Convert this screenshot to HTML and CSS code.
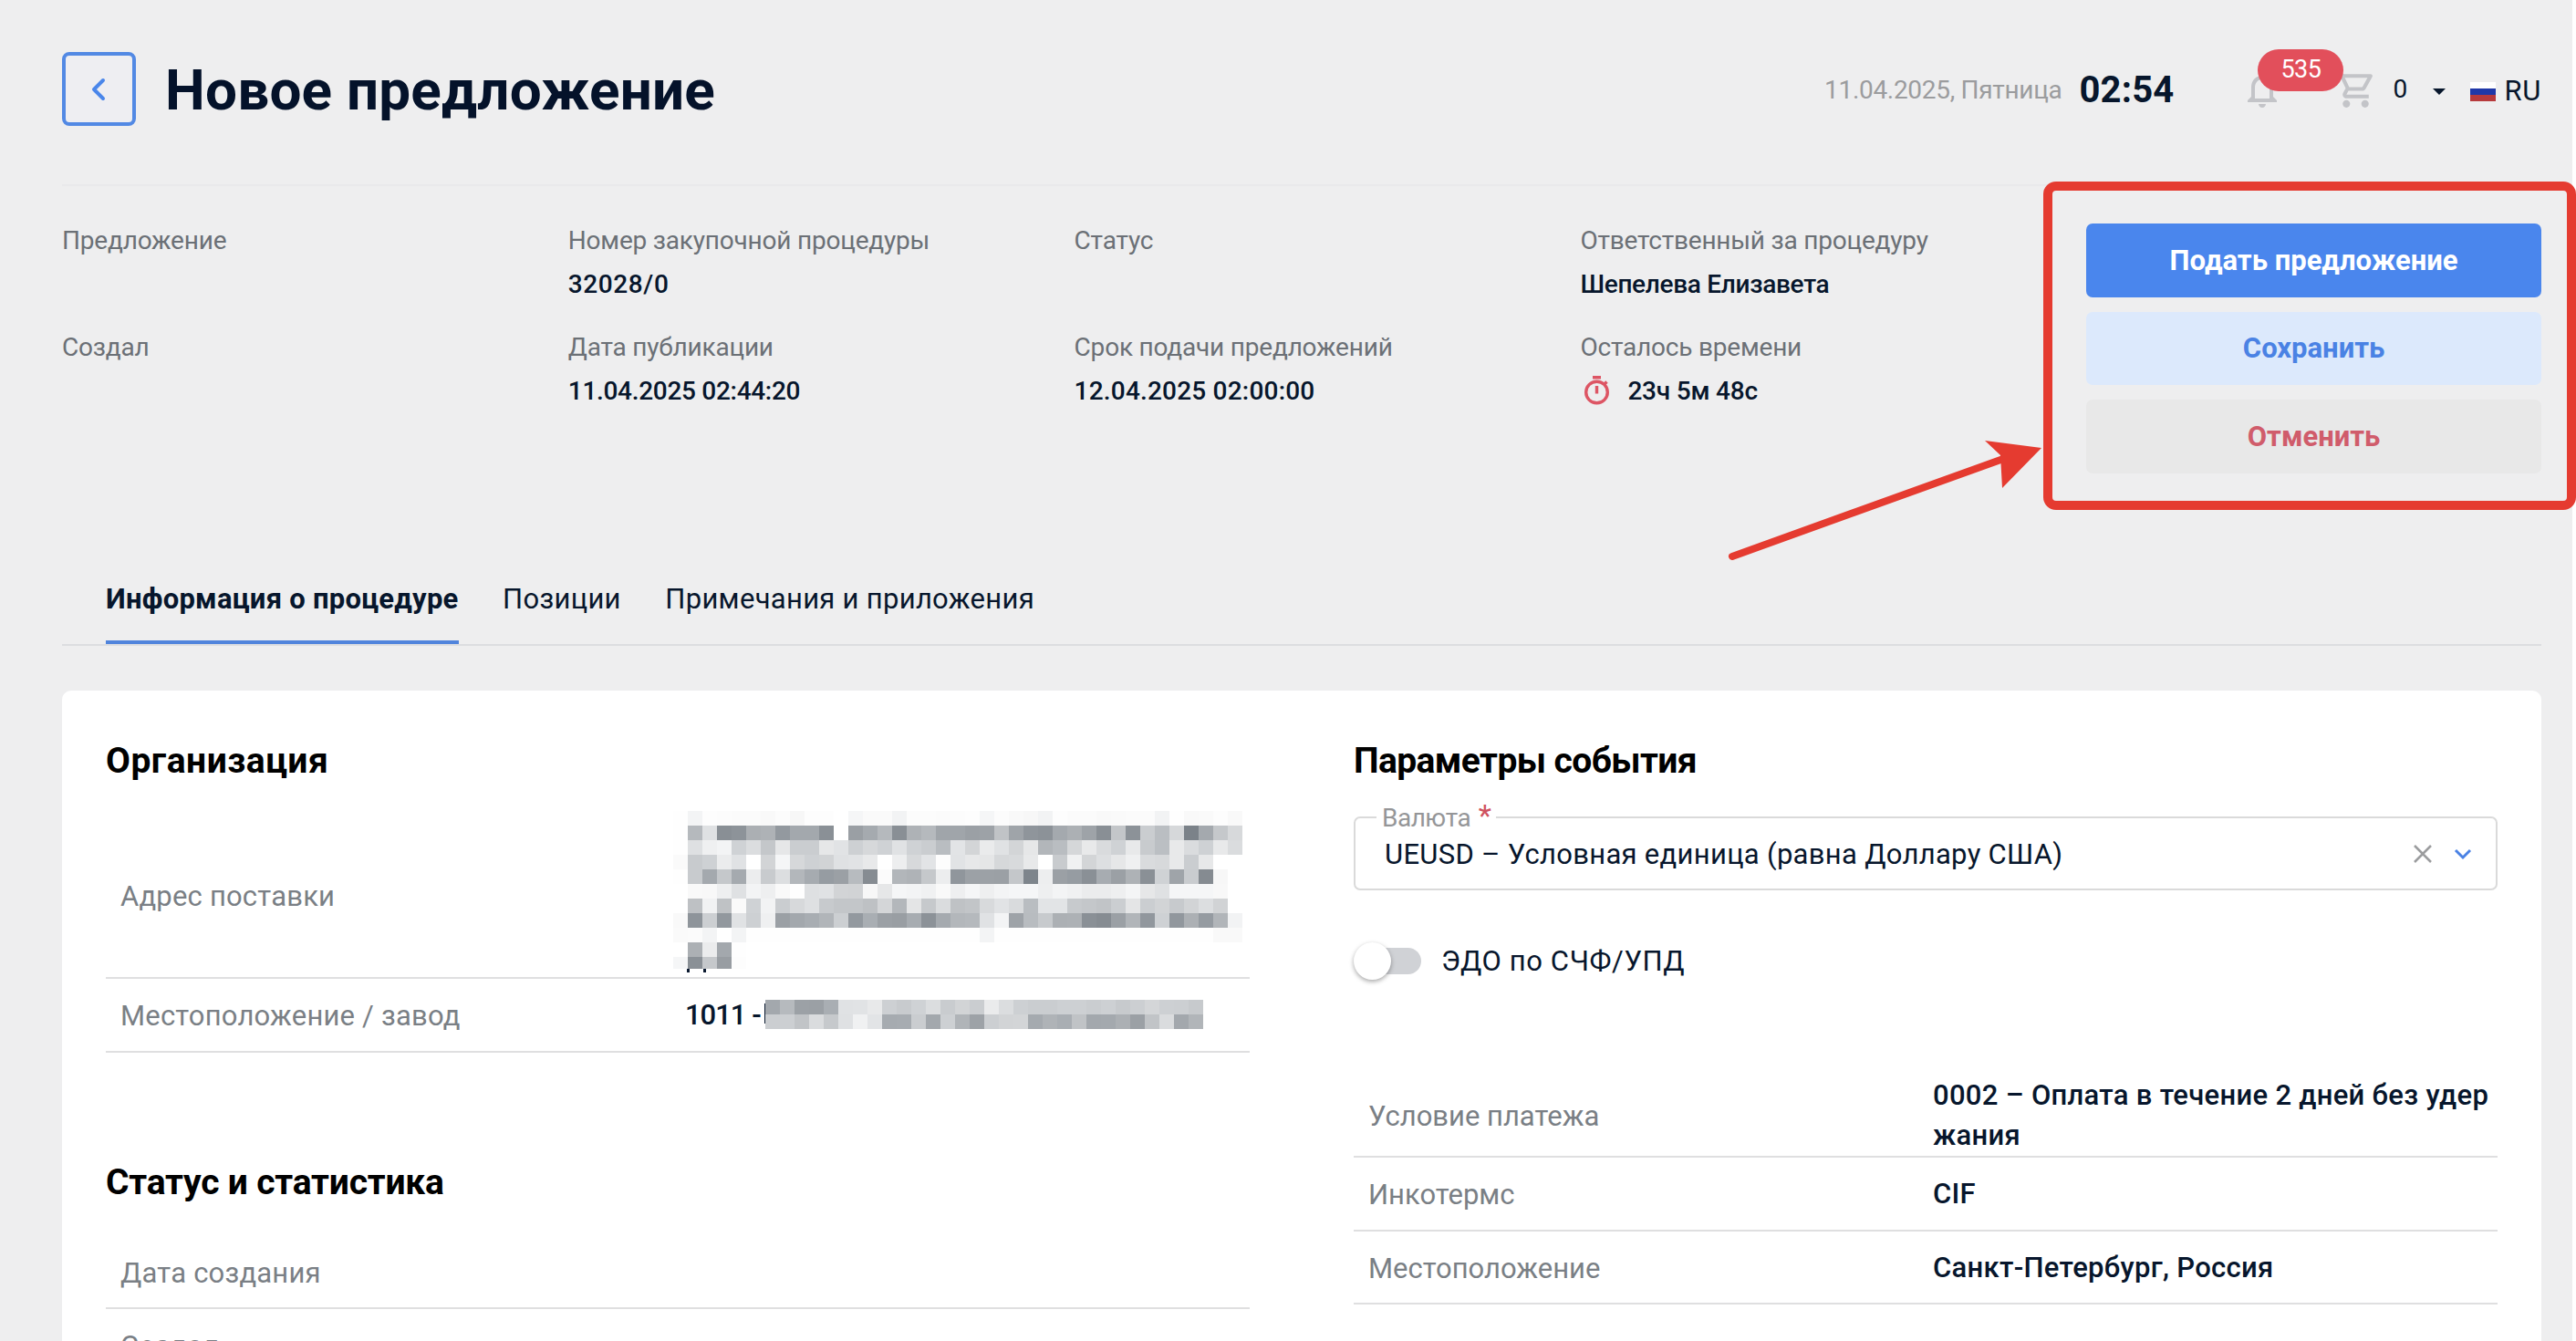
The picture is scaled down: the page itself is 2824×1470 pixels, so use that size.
FILE: index.html
```html
<!DOCTYPE html>
<html lang="ru">
<head>
  <meta charset="UTF-8" />
  <meta name="viewport" content="width=device-width, initial-scale=1.0"/>
  <title>Новое предложение</title>
  <link rel="stylesheet" href="styles.css">
</head>
<body>

  <div class="page">
    <header class="header">
      <button class="back-btn">
        <svg width="24" height="32" viewBox="0 0 24 32"><path d="M16 6 L6 16 L16 26" /></svg>
      </button>
      <h1>Новое предложение</h1>

      <div class="header-right">
        <span class="date">11.04.2025, Пятница</span>
        <span class="time">02:54</span>
        <div class="bell">
          <svg width="48" height="48" viewBox="0 0 24 24"><path d="M12 22c1.1 0 2-.9 2-2h-4c0 1.1.9 2 2 2zm6-6v-5c0-3.07-1.63-5.64-4.5-6.32V4c0-.83-.67-1.5-1.5-1.5s-1.5.67-1.5 1.5v.68C7.64 5.36 6 7.92 6 11v5l-2 2v1h16v-1l-2-2zm-2 1H8v-6c0-2.48 1.51-4.5 4-4.5s4 2.02 4 4.5v6z"/></svg>
          <span class="badge">535</span>
        </div>
        <svg class="cart" width="49" height="49" viewBox="0 0 24 24"><path d="M15.55 13c.75 0 1.41-.41 1.75-1.03l3.58-6.49A.996.996 0 0 0 20.01 4H5.21l-.94-2H1v2h2l3.6 7.59-1.35 2.44C4.52 15.37 5.48 17 7 17h12v-2H7l1.1-2h7.45zM6.16 6h12.15l-2.76 5H8.53L6.16 6zM7 18c-1.1 0-1.99.9-1.99 2S5.9 22 7 22s2-.9 2-2-.9-2-2-2zm10 0c-1.1 0-1.99.9-1.99 2s.89 2 1.99 2 2-.9 2-2-.9-2-2-2z"/></svg>
        <span class="cart-count">0</span>
        <span class="caret"></span>
        <span class="flag"></span>
        <span class="lang">RU</span>
      </div>
    </header>

    <section class="summary">
      <div class="info">
        <div class="field"><label>Предложение</label></div>
        <div class="field"><label>Создал</label></div>
      </div>
      <div class="info">
        <div class="field"><label>Номер закупочной процедуры</label><b class="number">32028/0</b></div>
        <div class="field"><label>Дата публикации</label><b>11.04.2025 02:44:20</b></div>
      </div>
      <div class="info">
        <div class="field"><label>Статус</label></div>
        <div class="field"><label>Срок подачи предложений</label><b class="deadline">12.04.2025 02:00:00</b></div>
      </div>
      <div class="info">
        <div class="field"><label>Ответственный за процедуру</label><b>Шепелева Елизавета</b></div>
        <div class="field">
          <label>Осталось времени</label>
          <b class="timer">
            <svg width="36" height="36" viewBox="0 0 36 36">
              <circle cx="18.500" cy="19" r="11.8" />
              <path d="M14 2.8h9M18.500 12v8.5M26.500 10.500l3-3" />
            </svg>
            23ч 5м 48с
          </b>
        </div>
      </div>
      <div class="actions">
        <button class="btn btn-primary">Подать предложение</button>
        <button class="btn btn-secondary">Сохранить</button>
        <button class="btn btn-cancel">Отменить</button>
      </div>
    </section>

    <nav class="tabs">
      <a class="tab active">Информация о процедуре</a>
      <a class="tab">Позиции</a>
      <a class="tab">Примечания и приложения</a>
    </nav>

    <main class="card">
      <div class="column">
        <h2 class="org-title">Организация</h2>
        <div class="table org-table">
          <div class="row row-address">
            <span class="label">Адрес поставки</span>
            <svg class="mask mask-address" width="624" height="178" id="mask-address"></svg>
          </div>
          <div class="row">
            <span class="label">Местоположение / завод</span>
            <span class="value plant"><span class="plant-code">1011 -</span><svg class="mask" width="482" height="34" id="mask-plant"></svg></span>
          </div>
        </div>

        <h2 class="stat-title">Статус и статистика</h2>
        <div class="table stat-table">
          <div class="row"><span class="label">Дата создания</span></div>
          <div class="row"><span class="label">Создал</span></div>
        </div>
      </div>

      <div class="column">
        <h2 class="params-title">Параметры события</h2>
        <div class="select">
          <span class="select-label">Валюта <i>*</i></span>
          <span class="select-value">UEUSD – Условная единица (равна Доллару США)</span>
          <svg class="clear" width="24" height="24" viewBox="0 0 24 24"><path d="M3 3l18 18M21 3L3 21" /></svg>
          <svg class="arrow-down" width="24" height="24" viewBox="0 0 24 24"><path d="M4 8l8 8 8-8" /></svg>
        </div>

        <div class="switch-row">
          <span class="switch"></span>
          <span>ЭДО по СЧФ/УПД</span>
        </div>

        <div class="table terms-table">
          <div class="row"><span class="label">Условие платежа</span><span class="value">0002 – Оплата в течение 2 дней без удер<br>жания</span></div>
          <div class="row"><span class="label">Инкотермс</span><span class="value">CIF</span></div>
          <div class="row"><span class="label">Местоположение</span><span class="value">Санкт-Петербург, Россия</span></div>
        </div>
      </div>
    </main>
  </div>

  <!-- Highlight around the action buttons -->
  <div class="highlight"></div>
  <svg class="pointer" width="360" height="150" viewBox="0 0 360 150">
    <path class="shaft" d="M19 139 L316 32" />
    <path d="M358 20 L296 12 L313 28 L315 64 Z" />
  </svg>

  <script>
    // two hex digits of brightness per 16px cell
    const address = [
      'fe f4 fd fc fb fb f9 fc f7 fd fd ff f6 fa fa f3 fc fc fb fc fd f6 fc f9 f7 f3 fd fb fb f9 fa fb fb f3 fe f9 fa fd f9',
      'fe b9 e1 8f 93 af b2 99 a8 a8 90 ff 9f aa b9 8f b2 b9 a5 a5 a0 a2 c3 a4 95 92 a9 b0 a3 8f c6 92 cd be d8 82 a9 c8 d9',
      'fe e0 f0 f4 d2 dd c7 e7 cd cd e7 e3 d0 d8 d2 e2 d2 cd bd e4 d5 eb e2 d5 e7 b6 bd d7 e9 db d2 e9 cb bf e9 dc d1 e9 dc',
      'fa cb d1 ec e2 ff d4 f6 d8 d1 d3 e1 e3 e9 ff ee d9 e4 fd e3 e8 e6 d8 da e9 ff cb f1 d5 df e7 f0 db d9 e9 cd e8 ff ff',
      'fe cb a9 c8 aa ed cb de b7 ab 9c a0 bb 8c fb b6 b3 c8 ed 96 a1 a1 a0 c7 85 ee a0 9c 90 ac a0 b2 90 d2 a4 cc 8b f7 ff',
      'ff f9 f8 ef e1 f4 ef f9 fe e0 e2 d4 d3 f7 e7 f6 f4 f1 f9 ef f6 ef f4 f6 f6 ef f4 f1 ec ec ef f5 e7 e1 f6 f6 f6 f8 ff',
      'ff c1 f2 c2 fa d2 f3 cd d9 e0 ca c6 c6 c1 d6 b7 e5 c9 dc c2 c5 da e3 db bd e4 e4 ca c7 c4 ce e5 ce d4 ca d4 de d3 ff',
      'f9 94 cf 98 e2 d0 f0 a0 a8 ad b5 cf 99 ae a0 9e ac 92 aa b7 b9 e2 f4 a3 bc ca b0 b1 90 8c a0 b5 97 d1 97 b0 9b b5 f3',
      'fa fb f4 ff f4 fe fe fe fe fe fe fe fe fe fe fe fe fe fe fe fe f4 fe fe fe fe fe fe fe fe fe fe fe fe fe fe fe f9 f9',
      'ff b0 ec a8 fe',
      'f6 90 c8 9d fd'
    ];
    const plant = [
      'a8 ba a1 a0 ae e2 e3 e9 d0 cb d2 dd cc d4 cd eb dd d0 cd cd d0 d0 cd d0 ca cf d6 d0 cf ca',
      'ce cf c4 dc c9 e1 f1 e4 ab ac cd a8 d0 b4 a2 cf d4 d5 aa b3 ae c3 a8 a9 b0 a0 c4 dc a8 b5'
    ];

    function rect(x, y, w, h, color) {
      return `<rect x="${x}" y="${y}" width="${w}" height="${h}" fill="${color}"/>`;
    }

    function drawMask(id, rows, extra, lastHeight) {
      let cells = extra;
      rows.forEach((row, y) => {
        const h = y === rows.length - 1 ? lastHeight : 16;
        row.split(' ').forEach((hex, x) => {
          const v = parseInt(hex, 16);
          const tint = Math.round((255 - v) / 18);
          cells += rect(x * 16, y * 16, 16, h, `rgb(${v - tint}, ${v}, ${Math.min(255, v + tint)})`);
        });
      });
      document.getElementById(id).innerHTML = cells;
    }

    drawMask('mask-address', address, rect(15, 172, 3, 5, '#0b1a30') + rect(33, 172, 3, 5, '#0b1a30'), 13);
    drawMask('mask-plant', plant, rect(-1, 4, 2, 22, '#0b1a30'), 16);
  </script>
</body>
</html>
```
FILE: styles.css
```css
* {
  box-sizing: border-box;
}

body {
  margin: 0;
  height: 1470px;
  overflow: hidden;
  position: relative;
  background: #fff;
  font-family: Roboto, sans-serif;
  font-size: 31px;
  letter-spacing: 0.2px;
  color: #07162c;
}

.page {
  width: 2820px;
  height: 1470px;
  padding: 58px 34px 0 68px;
  overflow: hidden;
  background: #eeeeef;
}

h1, h2 {
  margin: 0;
  font-weight: 700;
}

button {
  font-family: inherit;
  padding: 0;
}

/* Header */
.header {
  display: flex;
  align-items: center;
  height: 146px;
  padding-bottom: 65px;
  border-bottom: 2px solid #e9e9eb;
}

.back-btn {
  display: flex;
  align-items: center;
  justify-content: center;
  width: 81px;
  height: 81px;
  border: 4px solid #5289e4;
  border-radius: 8px;
  background: #eeeef2;
}

.back-btn path {
  fill: none;
  stroke: #4a86ea;
  stroke-width: 4;
  stroke-linecap: round;
  stroke-linejoin: round;
}

h1 {
  margin: 2px 0 0 32px;
  font-size: 62px;
  color: #04122a;
}

.header-right {
  display: flex;
  align-items: center;
  margin-left: auto;
}

.header-right path {
  fill: #c3c4c8;
}

.date {
  margin-top: 1px;
  font-size: 28px;
  letter-spacing: -0.3px;
  color: #9b9c9e;
}

.time {
  margin: 1px 0 0 19px;
  font-size: 40px;
  font-weight: 700;
}

.bell {
  position: relative;
  height: 48px;
  margin-left: 73px;
}

.badge {
  position: absolute;
  left: 19px;
  top: -20px;
  width: 94px;
  height: 46px;
  border-radius: 23px;
  background: #e24f5b;
  color: #fff;
  font-size: 27px;
  line-height: 45px;
  letter-spacing: -0.5px;
  text-align: center;
}

.cart {
  margin-left: 54px;
}

.cart-count {
  margin-left: 16px;
  font-size: 28px;
}

.caret {
  margin: 5px 27px 0 28px;
  border: 7px solid transparent;
  border-top-color: #07162c;
  border-bottom: 0;
}

.flag {
  width: 28px;
  height: 21px;
  margin: 5px 9px 0 0;
  background: linear-gradient(#fff 33.3%, #2038a8 33.3% 66.6%, #b73a3c 66.6%);
}

.lang {
  margin-top: 3px;
  letter-spacing: 0.7px;
}

/* Summary */
.summary {
  display: grid;
  grid-template-columns: repeat(5, 1fr);
  gap: 56px;
  height: 407px;
  padding-top: 36px;
}

.info {
  font-size: 28px;
  line-height: 48px;
  letter-spacing: -0.2px;
}

.field {
  height: 117px;
}

.field label {
  display: block;
  color: #6b7076;
}

.field b {
  display: block;
  font-weight: 500;
  letter-spacing: -0.3px;
}

.field .number {
  letter-spacing: 0.6px;
}

.field .deadline {
  letter-spacing: 0.2px;
}

.field .timer {
  display: flex;
  align-items: center;
  gap: 16px;
  letter-spacing: -0.2px;
}

.timer svg {
  fill: none;
  stroke: #dd5564;
  stroke-width: 3.4;
}

.actions {
  display: flex;
  flex-direction: column;
  gap: 16px;
  padding-top: 5px;
}

.btn {
  height: 80.6px;
  border: none;
  border-radius: 7px;
  font-size: 31px;
  font-weight: 700;
}

.btn-primary {
  background: #4a86ed;
  color: #fff;
}

.btn-secondary {
  background: #dce9fc;
  color: #4a82e4;
}

.btn-cancel {
  background: #e8e8e8;
  color: #d05c6b;
}

/* Tabs */
.tabs {
  display: flex;
  gap: 48.5px;
  height: 97px;
  padding-left: 48px;
  border-bottom: 2px solid #dcdde0;
}

.tab {
  padding-top: 27px;
  letter-spacing: 0.3px;
}

.tab.active {
  border-bottom: 4px solid #5084dc;
  font-weight: 700;
  letter-spacing: 0.25px;
}

/* Card */
.card {
  display: grid;
  grid-template-columns: 1fr 1fr;
  gap: 114px;
  height: 760px;
  margin-top: 49px;
  padding: 49px 48px 0;
  border-radius: 10px;
  background: #fff;
}

h2 {
  font-size: 39px;
  line-height: 56px;
  letter-spacing: -0.2px;
  color: #000;
}

.org-title {
  letter-spacing: 0.5px;
}

.params-title {
  letter-spacing: -0.6px;
}

.row {
  display: flex;
  align-items: center;
  min-height: 80.7px;
  padding-top: 2px;
  border-bottom: 2.5px solid #dfdfe0;
}

.label {
  width: 635px;
  padding-left: 16px;
  color: #7a7f85;
}

.value {
  font-weight: 500;
  line-height: 44px;
  letter-spacing: 0.3px;
}

.org-table {
  margin-top: 30px;
}

.row-address {
  height: 181px;
}

.mask {
  display: block;
  overflow: visible;
}

.mask-address {
  margin: -10px 0 0 -13px;
}

.plant {
  display: flex;
  align-items: center;
}

.plant-code {
  width: 88px;
  letter-spacing: -1px;
}

.stat-title {
  margin-top: 114px;
}

.stat-table {
  margin-top: 31px;
}

/* Currency select */
.select {
  position: relative;
  display: flex;
  align-items: center;
  height: 81px;
  margin-top: 33px;
  padding: 1px 24px 0 32px;
  border: 2.5px solid #dadada;
  border-radius: 7px;
}

.select-label {
  position: absolute;
  left: 23px;
  top: -18px;
  padding: 0 6px;
  background: #fff;
  font-size: 28px;
  letter-spacing: -0.5px;
  line-height: 36px;
  color: #959698;
}

.select-label i {
  margin-left: 2px;
  font-style: normal;
  font-size: 33px;
  line-height: 30px;
  color: #cf5260;
}

.select-value {
  letter-spacing: 0.3px;
}

.select path {
  fill: none;
  stroke: #9b9c9e;
  stroke-width: 2.5;
}

.clear {
  margin-left: auto;
}

.arrow-down {
  margin-left: 20px;
}

.select .arrow-down path {
  stroke: #4a82e4;
  stroke-width: 3;
}

.switch-row {
  display: flex;
  align-items: center;
  gap: 22px;
  margin-top: 56px;
  letter-spacing: 0.6px;
}

.switch {
  position: relative;
  width: 74px;
  height: 29px;
  margin: 7px 0;
  border-radius: 15px;
  border-left: 3px solid #fff;
  background: #d0d2d6;
}

.switch::before {
  content: "";
  position: absolute;
  left: -3px;
  top: -6px;
  width: 41px;
  height: 41px;
  border-radius: 50%;
  background: #fff;
  box-shadow: 0 2px 5px rgba(0, 0, 0, 0.35);
}

.terms-table {
  margin-top: 102px;
}

.terms-table .label {
  letter-spacing: 0;
}

/* Red frame and arrow */
.highlight {
  position: absolute;
  left: 2240px;
  top: 199px;
  width: 584px;
  height: 360px;
  border: 10px solid #e53b30;
  border-radius: 14px;
}

.pointer {
  position: absolute;
  left: 1880px;
  top: 471px;
  fill: #e53b30;
}

.pointer .shaft {
  stroke: #e53b30;
  stroke-width: 8;
  stroke-linecap: round;
}
```
